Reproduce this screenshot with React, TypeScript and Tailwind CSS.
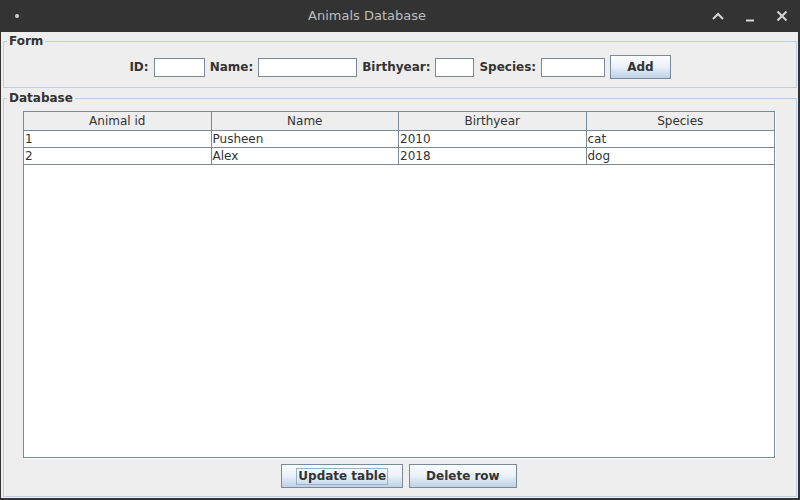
const columns = ['Animal id', 'Name', 'Birthyear', 'Species'];

const rows = [
  ['1', 'Pusheen', '2010', 'cat'],
  ['2', 'Alex', '2018', 'dog'],
];

const font = "font-['DejaVu_Sans',sans-serif]";

const Field = ({ label, width }: { label: string; width: string }) => (
  <>
    <span className="text-[12px] font-bold text-[#333333]">{label}</span>
    <input
      type="text"
      className={`h-[19px] ${width} border border-[#7a8a99] bg-white outline-none`}
    />
  </>
);

const MetalButton = ({ label, focused }: { label: string; focused?: boolean }) => (
  <button
    type="button"
    className="flex h-[24px] items-center border border-[#7a8a99] bg-gradient-to-b from-[#fbfdff] via-[#eaf1f8] to-[#bdd1e7] px-[14px] text-[12px] font-bold text-[#333333]"
  >
    <span className={focused ? 'border border-[#99b0c9] px-[1px] leading-[15px]' : 'px-[2px] leading-[15px]'}>
      {label}
    </span>
  </button>
);

export default function App() {
  return (
    <div className={`flex h-[500px] w-[800px] flex-col bg-[#333333] ${font}`}>
      {/* title bar */}
      <div className="flex h-[32px] shrink-0 items-center">
        <div className="flex w-[34px] justify-center">
          <span className="h-[4px] w-[4px] rounded-full bg-[#cfcfcf]" />
        </div>
        <div className="flex-1 text-center text-[13px] text-[#bdbdbd]">Animals Database</div>
        <div className="flex w-[100px] items-center justify-end gap-[16px] pr-[10px]">
          <svg width="16" height="16" viewBox="0 0 16 16" className="text-[#d6d6d6]">
            <path d="M3 11 L8 6 L13 11" fill="none" stroke="currentColor" strokeWidth="2" />
          </svg>
          <svg width="16" height="16" viewBox="0 0 16 16" className="text-[#d6d6d6]">
            <path d="M4 12.5 H12" fill="none" stroke="currentColor" strokeWidth="2" />
          </svg>
          <svg width="16" height="16" viewBox="0 0 16 16" className="text-[#d6d6d6]">
            <path d="M3.5 3.5 L12.5 12.5 M12.5 3.5 L3.5 12.5" fill="none" stroke="currentColor" strokeWidth="2" />
          </svg>
        </div>
      </div>

      {/* window body */}
      <div className="mb-[2px] ml-[1px] mr-[2px] flex flex-1 flex-col bg-[#eeeeee] pl-[2px] pr-[1px] pt-[2px]">
        <fieldset className="border border-[#b8cfe5]">
          <legend className="ml-[3px] px-[2px] text-[12px] font-bold leading-[14px] text-[#333333]">Form</legend>
          <div className="flex items-center justify-center gap-[5px] pb-[8px] pt-[7px]">
            <Field label="ID:" width="w-[51px]" />
            <Field label="Name:" width="w-[99px]" />
            <Field label="Birthyear:" width="w-[39px]" />
            <Field label="Species:" width="w-[64px]" />
            <MetalButton label="Add" />
          </div>
        </fieldset>

        <fieldset className="mb-[1px] mt-[3px] flex min-h-0 flex-1 flex-col border border-[#b8cfe5]">
          <legend className="ml-[3px] px-[2px] text-[12px] font-bold leading-[14px] text-[#333333]">Database</legend>
          <div className="flex h-full flex-col pb-[8px] pt-[6px]">
            <div className="ml-[19px] h-[347px] w-[752px] border border-[#7a8a99] bg-white shadow-[1px_1px_0_#ffffff]">
              <div className="grid h-[19px] grid-cols-4 border-b border-[#7a8a99] bg-[#eeeeee]">
                {columns.map((c, i) => (
                  <div
                    key={c}
                    className={`text-center text-[12px] leading-[18px] text-[#333333] ${i < 3 ? 'border-r border-[#7a8a99]' : ''}`}
                  >
                    {c}
                  </div>
                ))}
              </div>
              {rows.map((r) => (
                <div key={r[0]} className="grid h-[17px] grid-cols-4 border-b border-[#7a8a99]">
                  {r.map((v, i) => (
                    <div
                      key={i}
                      className={`pl-[1px] text-[12px] leading-[16px] text-[#333333] ${i < 3 ? 'border-r border-[#7a8a99]' : ''}`}
                    >
                      {v}
                    </div>
                  ))}
                </div>
              ))}
            </div>
            <div className="mt-[6px] flex justify-center gap-[6px] pr-[2px]">
              <MetalButton label="Update table" focused />
              <MetalButton label="Delete row" />
            </div>
          </div>
        </fieldset>
      </div>
    </div>
  );
}
